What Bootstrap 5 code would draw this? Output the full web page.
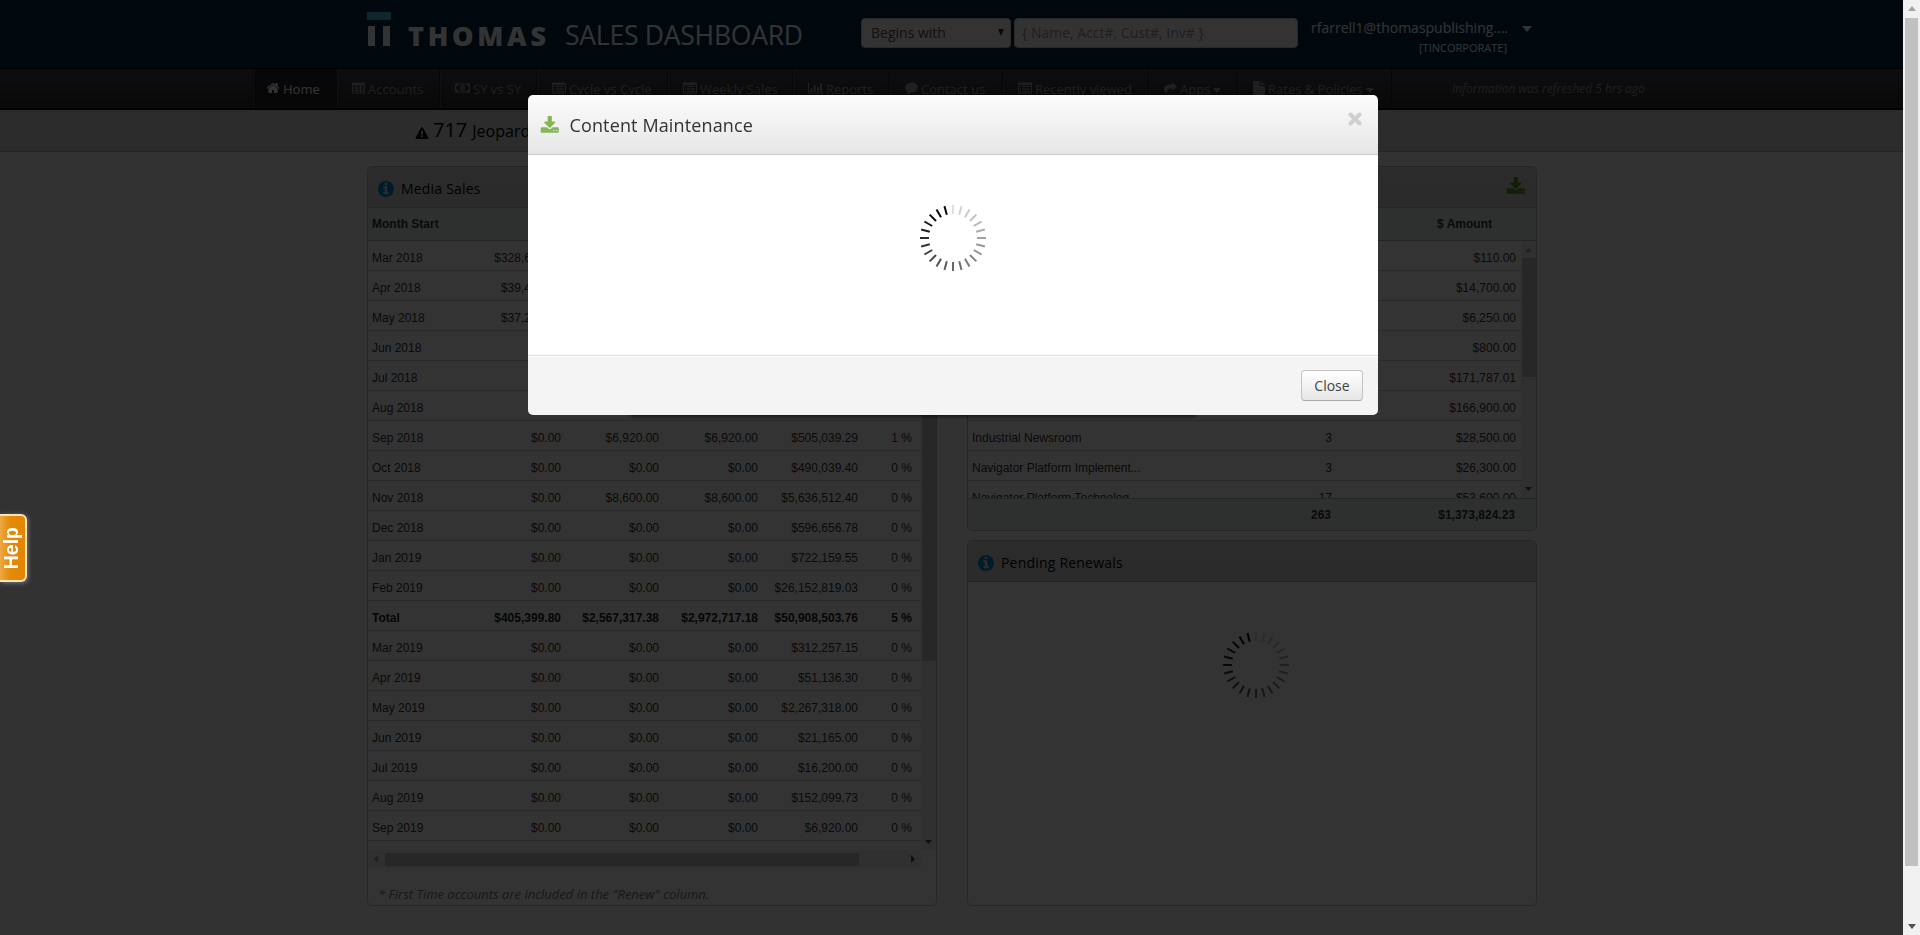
<!DOCTYPE html>
<html lang="en">
<head>
<meta charset="utf-8">
<title>Sales Dashboard</title>
<link href="https://cdn.jsdelivr.net/npm/bootstrap@5.3.0/dist/css/bootstrap.min.css" rel="stylesheet">
<style>
html,body{height:935px;overflow:hidden}
body{font-family:"Open Sans","Liberation Sans",sans-serif;font-size:14px;line-height:20px;color:#333;background:#f7f7f7}
svg{fill:currentColor;flex:none}
.page{width:1904px;height:935px;overflow:hidden;background:#f7f7f7}
.wrap{width:1170px}
.topbar{height:68px;background:#002b43;color:#fff}
.logo{padding-top:10px;width:494px;overflow:visible}
.search{padding-top:18px;gap:3px}
.search .form-select,.search .form-control{height:30px;border:1px solid #ccc;border-radius:4px;padding:3px 6px 3px 9px;font-size:14px;line-height:20px;color:#555;background:#fff}
.search .form-select{width:150px}
.search .form-control{width:284px;padding:2px 7px 4px}
.search .form-control::placeholder{color:#999}
.user{padding-top:18px;margin-left:13px;width:196px;text-align:right;font-size:14px;line-height:20px;white-space:nowrap}
.user small{display:block;font-size:11px;line-height:20px}
.mainnav{height:42px;border-top:1px solid #000;border-bottom:2px solid #000;background:linear-gradient(#454545,#2d2d2d);padding-left:252px;font-size:13px;color:#999}
.mainnav .nav-link{color:#999;padding:10px 0 0 15px;border-left:1px solid #222;box-shadow:inset 1px 0 #505050;gap:3px;line-height:20px;white-space:nowrap}
.mainnav .nav-link svg{margin-top:2px}
.mainnav .nav-link.active{color:#fff;background:#262626;padding-left:13px}
.refreshed{font-size:12px;font-style:italic;padding:10px 0 0 60px;border-left:1px solid #222}
.subbar{height:42px;background:#d9d9d9;border-bottom:1px solid #b4b4b4;color:#000;padding-left:415px;font-size:16px}
.subbar b{font-weight:400;font-size:20px}
.panel{width:570px;border:1px solid #bbb;border-radius:5px;background:#fff;overflow:hidden}
.panel-head{height:41px;background:linear-gradient(#dadada,#d4d4d4);border-bottom:1px solid #bbb;color:#000;font-weight:500;font-size:14px;letter-spacing:.2px;padding:4px 11px 0 10px;gap:7px}
.panel-head .info{color:#0088cc;margin-top:-1px}
.grid-font{font-family:"Liberation Sans",Arial,sans-serif;font-size:12px}
.grid-font table{table-layout:fixed;margin:0;color:#333;border-collapse:separate;border-spacing:0}
.grid-font td{height:30px;padding:4px 5px 0;border-bottom:1px solid #ccc;text-align:right;vertical-align:middle;line-height:16px;white-space:nowrap;overflow:hidden;color:#333;background:none;box-shadow:none}
.grid-font td:first-child{text-align:left;padding-left:4px}
.grid-font tr.fw-bold td{color:#222}
.gridhead,.gridfoot{height:33px;background:#e2f1ec;border-bottom:1px solid #bbb;font-weight:700;padding:8px 4px;line-height:16px;color:#333}
.gridfoot{border-top:1px solid #bbb;border-bottom:0}
.track{background:#f1f1f1;width:16px;color:#505050}
.thumb{background:#c1c1c1}
.note{font-size:13px;font-style:italic;color:#777;padding:16px 0 0 10px}
.modal-backdrop.show{opacity:.8}
.modal{width:1906px;overflow:hidden}
.modal-dialog{max-width:850px;width:850px;margin:95px auto 0}
.modal-content{border:0;border-radius:5px;height:320px;background:transparent}
.modal-content::after{content:"";position:absolute;z-index:-1;left:102px;right:182px;bottom:1px;height:60px;box-shadow:0 2px 4px rgba(0,0,0,.75)}
.modal-header{height:60px;padding:0 16px 0 12px;background:linear-gradient(#fcfcfc,#e6e6e6);border-bottom:1px solid #ccc;border-radius:5px 5px 0 0;color:#333}
.modal-title{font-size:18px;font-weight:500;line-height:24px;margin-left:10px;letter-spacing:.13px}
.modal-body{height:200px;flex:none;background:#fff;padding:0}
.modal-footer{height:60px;background:#f4f4f4;border-top:1px solid #ddd;box-shadow:inset 0 1px #fff;padding:0 15px;border-radius:0 0 5px 5px}
.btn-close-text{margin:0;width:62px;height:31px;padding:4px 0;font-size:14px;line-height:20px;color:#444;border:1px solid #c4c4c4;border-bottom-color:#aaa;border-radius:4px;background:linear-gradient(#fff,#e6e6e6)}
.help{position:fixed;z-index:1080;left:0;top:514px;width:27px;height:68px;background:linear-gradient(90deg,#eea845,#e48a06 40%,#e28500);border:2px solid #fbe3bd;border-left:0;border-radius:0 6px 6px 0;box-shadow:1px 1px 4px #777;color:#fff;font:700 19.5px/24px "Liberation Sans",Arial,sans-serif}
.help span{writing-mode:vertical-rl;transform:rotate(180deg);width:24px;margin-right:4px}
.pagebar{position:fixed;z-index:1081;right:0;top:0;width:17px;height:935px;background:#f1f1f1}
.pagebar .thumb{width:13px;height:848px;margin:7px auto 58px}
</style>
</head>
<body>
<svg width="0" height="0" class="position-absolute">
<symbol id="home" viewBox="0 0 1792 1792"><path d="M1472 992v480q0 26-19 45t-45 19h-384v-384h-256v384h-384q-26 0-45-19t-19-45v-480q0-1 .5-3t.5-3l575-474 575 474q1 2 1 6zm223-69l-62 74q-8 9-21 11h-3q-13 0-21-7l-692-577-692 577q-12 8-24 7-13-2-21-11l-62-74q-8-10-7-23.5t11-21.5l719-599q32-26 76-26t76 26l244 204v-195q0-14 9-23t23-9h192q14 0 23 9t9 23v408l219 182q10 8 11 21.5t-7 23.5z"/></symbol>
<symbol id="dl" viewBox="0 0 1792 1792"><path d="M1344 1344q0-26-19-45t-45-19-45 19-19 45 19 45 45 19 45-19 19-45zm256 0q0-26-19-45t-45-19-45 19-19 45 19 45 45 19 45-19 19-45zm128-224v320q0 40-28 68t-68 28h-1472q-40 0-68-28t-28-68v-320q0-40 28-68t68-28h465l135 136q58 56 136 56t136-56l136-136h464q40 0 68 28t28 68zm-325-569q17 41-14 70l-448 448q-18 19-45 19t-45-19l-448-448q-31-29-14-70 17-39 59-39h256v-448q0-26 19-45t45-19h256q26 0 45 19t19 45v448h256q42 0 59 39z"/></symbol>
<symbol id="info" viewBox="128 128 1536 1536"><path d="M1152 1376v-160q0-14-9-23t-23-9h-96v-512q0-14-9-23t-23-9h-320q-14 0-23 9t-9 23v160q0 14 9 23t23 9h96v320h-96q-14 0-23 9t-9 23v160q0 14 9 23t23 9h448q14 0 23-9t9-23zm-128-896v-160q0-14-9-23t-23-9h-192q-14 0-23 9t-9 23v160q0 14 9 23t23 9h192q14 0 23-9t9-23zm640 416q0 209-103 385.5t-279.5 279.5-385.5 103-385.5-103-279.5-279.5-103-385.5 103-385.5 279.5-279.5 385.5-103 385.5 103 279.5 279.5 103 385.5z"/></symbol>
<symbol id="warn" viewBox="0 0 1792 1664"><path d="M1024 1375v-190q0-14-9.5-23.5t-22.5-9.5h-192q-13 0-22.5 9.5t-9.5 23.5v190q0 14 9.5 23.5t22.5 9.5h192q13 0 22.5-9.5t9.5-23.5zm-2-374l18-459q0-12-10-19-13-11-24-11h-220q-11 0-24 11-10 7-10 21l17 457q0 10 10 16.5t24 6.5h185q14 0 23.5-6.5t10.5-16.5zm-14-934l768 1408q35 63-2 126-17 29-46.5 46t-63.5 17h-1536q-34 0-63.5-17t-46.5-46q-37-63-2-126l768-1408q17-31 47-49t65-18 65 18 47 49z"/></symbol>
<symbol id="tbl" viewBox="0 0 13 13"><path fill-rule="evenodd" d="M1 1h11q1 0 1 1v9q0 1-1 1H1q-1 0-1-1V2q0-1 1-1zM1 4v2h3V4zm4 0v2h3V4zm4 0v2h3V4zM1 7v1.700h3V7zm4 0v1.700h3V7zm4 0v1.700h3V7zM1 9.500V11h3V9.500zm4 0V11h3V9.500zm4 0V11h3V9.500z"/></symbol>
<symbol id="money" viewBox="0 0 15 13"><path fill-rule="evenodd" d="M0 2h15v9H0zM3.200 3A2.200 2.200 0 0 1 1 5.200v2.600A2.200 2.200 0 0 1 3.200 10h8.600A2.200 2.200 0 0 1 14 7.800V5.200A2.200 2.200 0 0 1 11.800 3zM7.500 3.500c1.500 0 2.300 1.400 2.300 3s-.8 3-2.300 3-2.300-1.400-2.300-3 .8-3 2.300-3zM6.500 5.300v.6h.6v2H6.400v.6h2.200v-.6H8V4.800h-.7z"/></symbol>
<symbol id="list" viewBox="0 0 14 13"><path fill-rule="evenodd" d="M1 1h12q1 0 1 1v9q0 1-1 1H1q-1 0-1-1V2q0-1 1-1zm0 2.500V11h12V3.500zM2 4.500h1.200v1H2zm2.200 0H12v1H4.200zM2 6.700h1.200v1H2zm2.200 0H12v1H4.200zM2 8.900h1.200v1H2zm2.200 0H12v1H4.200z"/></symbol>
<symbol id="bars" viewBox="0 0 15 13"><path d="M0 1h1v10h14v1H0zM2.500 7h2v3.300h-2zM5.700 3.500h2v6.800h-2zM8.900 5.200h2v5.100h-2zM12 2h2v8.300h-2z"/></symbol>
<symbol id="comment" viewBox="0 0 13 13"><path d="M6.500 1C10 1 13 3.200 13 6s-3 5-6.500 5h-1C4.500 12 3 12.700 1.500 12.800 2.200 12 2.500 11 2.400 10 .9 9 0 7.600 0 6c0-2.800 3-5 6.500-5z"/></symbol>
<symbol id="share" viewBox="0 0 13 13"><path d="M8 .8 13 5 8 9.300V7C4.500 7 2.500 8 3.200 12.200 1 10.600 0 9 .2 7 .5 4.200 3.500 3 8 3z"/></symbol>
<symbol id="file" viewBox="0 0 11 13"><path d="M0 0h6v4.600h5V13H0zM7 0l4 3.700H7z"/></symbol>
<symbol id="down" viewBox="0 0 8 5" preserveAspectRatio="none"><path d="M0 0h8L4 5z"/></symbol>
<symbol id="up" viewBox="0 0 8 5"><path d="M0 5h8L4 0z"/></symbol>
<symbol id="ticks" viewBox="-35 -35 70 70"><g id="tickset" stroke-width="2"></g></symbol>
</svg>

<div class="page">
  <header class="topbar">
    <div class="wrap mx-auto d-flex">
      <svg class="logo" width="494" height="50" viewBox="0 0 494 40" preserveAspectRatio="xMinYMin">
        <path fill="#4bbcdc" d="M0 2h24v8H0z"/><path fill="#fff" d="M1 16h7v20H1zM16 16h7v20h-7z"/>
        <text x="41" y="36" font-family="Open Sans" font-weight="800" font-size="27" textLength="138" lengthAdjust="spacing">THOMAS</text>
        <text x="198" y="35" font-family="Open Sans" font-size="26.500" textLength="238">SALES DASHBOARD</text>
      </svg>
      <div class="search d-flex">
        <div class="form-select d-flex justify-content-between align-items-center">Begins with <svg width="6" height="7" class="text-dark" style="margin-top:-1px"><use href="#down"/></svg></div>
        <input class="form-control" placeholder="{ Name, Acct#, Cust#, Inv# }">
      </div>
      <div class="user">rfarrell1@thomaspublishing....<small>[TINCORPORATE]</small></div>
      <svg width="10" height="6" style="margin:26px 0 0 15px"><use href="#down"/></svg>
    </div>
  </header>
  <nav class="mainnav d-flex" id="nav"></nav>
  <div class="subbar d-flex align-items-center">
    <svg width="14" height="12" class="mt-1"><use href="#warn"/></svg><b class="ms-1" style="margin-top:-2px">717</b><span style="margin-left:5px">Jeopardy</span>
  </div>
  <main class="wrap mx-auto d-flex justify-content-between" style="padding-top:14px">
    <section class="panel" style="height:740px">
      <div class="panel-head d-flex align-items-center"><svg class="info" width="16" height="16"><use href="#info"/></svg>Media Sales</div>
      <div class="grid-font">
        <div class="gridhead">Month Start</div>
        <div class="d-flex" style="height:609px">
          <table id="media" style="width:553px;height:600px"><colgroup><col style="width:98px"><col style="width:100px"><col style="width:98px"><col style="width:99px"><col style="width:100px"><col style="width:54px"><col style="width:4px"></colgroup></table>
          <div class="track d-flex flex-column justify-content-between align-items-center"><div class="thumb" style="width:14px;height:404px;margin-top:16px"></div><svg width="7" height="4" style="margin-bottom:6px"><use href="#down"/></svg></div>
        </div>
        <div class="track d-flex align-items-center" style="width:553px;height:18px;padding:0 6px"><svg width="4" height="8" viewBox="0 0 4 8" opacity=".5"><path d="M4 0v8L0 4z"/></svg><div class="thumb" style="width:474px;height:13px;margin-left:7px"></div><svg class="ms-auto" width="4" height="8" viewBox="0 0 4 8"><path d="M0 0v8l4-4z"/></svg></div>
      </div>
      <div class="note">* First Time accounts are included in the "Renew" column.</div>
    </section>
    <div>
      <section class="panel" style="height:365px;margin-bottom:9px">
        <div class="panel-head d-flex align-items-center justify-content-end" style="padding-top:0"><svg width="19.500" height="19.500" style="color:#4f9422"><use href="#dl"/></svg></div>
        <div class="grid-font">
          <div class="gridhead text-end" style="padding-right:44px">$ Amount</div>
          <div class="d-flex overflow-hidden" style="height:257px">
            <table id="products" style="width:553px;height:270px"><colgroup><col style="width:269px"><col style="width:100px"><col style="width:184px"></colgroup></table>
            <div class="track d-flex flex-column align-items-center"><svg width="7" height="4" opacity=".5" style="margin-top:7px"><use href="#up"/></svg><div class="thumb" style="width:14px;height:119px;margin-top:6px"></div><svg class="mt-auto" width="7" height="4" style="margin-bottom:7px"><use href="#down"/></svg></div>
          </div>
          <div class="gridfoot d-flex justify-content-end" style="padding-right:21px"><span>263</span><span class="text-end" style="width:184px">$1,373,824.23</span></div>
        </div>
      </section>
      <section class="panel" style="height:366px">
        <div class="panel-head d-flex align-items-center"><svg class="info" width="16" height="16"><use href="#info"/></svg>Pending Renewals</div>
        <div class="text-center" style="padding:48px 0 0 8px"><svg width="70" height="70"><use href="#ticks"/></svg></div>
      </section>
    </div>
  </main>
</div>

<div class="modal-backdrop show"></div>
<div class="modal show d-block" tabindex="-1">
  <div class="modal-dialog">
    <div class="modal-content">
      <div class="modal-header">
        <svg width="19.500" height="19.500" style="color:#87b556;margin-top:3px"><use href="#dl"/></svg>
        <h4 class="modal-title me-auto">Content Maintenance</h4>
        <svg width="14" height="14" viewBox="0 0 14 14" style="margin-top:-11px"><path stroke="#cfcfcf" stroke-width="4" stroke-linecap="round" d="M2.500 2.500l9 9m0-9l-9 9"/></svg>
      </div>
      <div class="modal-body text-center"><svg width="70" height="70" style="margin-top:48px"><use href="#ticks"/></svg></div>
      <div class="modal-footer"><button class="btn btn-close-text">Close</button></div>
    </div>
  </div>
</div>
<div class="help d-flex justify-content-center align-items-center"><span>Help</span></div>
<div class="pagebar d-flex flex-column align-items-center" style="padding-top:6px"><svg width="8" height="5" style="color:#a3a3a3"><use href="#up"/></svg><div class="thumb"></div><svg width="8" height="5" style="color:#505050"><use href="#down"/></svg></div>

<script src="https://cdn.jsdelivr.net/npm/bootstrap@5.3.0/dist/js/bootstrap.bundle.min.js"></script>
<script>
// navigation: icon, label, width, icon width, has menu
const nav=[["home","Home",84,14],["tbl","Accounts",103,13],["money","SY vs SY",97,15],["list","Cycle vs Cycle",131,14],["list","Weekly Sales",125,14],["bars","Reports",97,15],["comment","Contact us",113,13],["list","Recently viewed",146,14],["share","Apps",89,13,1],["file","Rates & Policies",154,12,1]];
document.getElementById("nav").innerHTML=nav.map((n,i)=>`<a class="nav-link d-flex${i?"":" active"}" style="width:${n[2]}px"><svg width="${n[3]}" height="14"><use href="#${n[0]}"/></svg><span>${n[1].replace("&","&amp;")}</span>${n[4]?'<svg width="8" height="5" style="margin-top:9px"><use href="#down"/></svg>':""}</a>`).join("")+'<span class="refreshed">Information was refreshed 5 hrs ago</span>';
const z="$0.00";
const media=[["Mar 2018","$328,612.40"],["Apr 2018","$39,415.20"],["May 2018","$37,210.60"],["Jun 2018"],["Jul 2018"],["Aug 2018"],
["Sep 2018",z,"$6,920.00","$6,920.00","$505,039.29","1 %"],["Oct 2018",z,z,z,"$490,039.40","0 %"],["Nov 2018",z,"$8,600.00","$8,600.00","$5,636,512.40","0 %"],["Dec 2018",z,z,z,"$596,656.78","0 %"],["Jan 2019",z,z,z,"$722,159.55","0 %"],["Feb 2019",z,z,z,"$26,152,819.03","0 %"],
["Total","$405,399.80","$2,567,317.38","$2,972,717.18","$50,908,503.76","5 %"],
["Mar 2019",z,z,z,"$312,257.15","0 %"],["Apr 2019",z,z,z,"$51,136.30","0 %"],["May 2019",z,z,z,"$2,267,318.00","0 %"],["Jun 2019",z,z,z,"$21,165.00","0 %"],["Jul 2019",z,z,z,"$16,200.00","0 %"],["Aug 2019",z,z,z,"$152,099.73","0 %"],["Sep 2019",z,z,z,"$6,920.00","0 %"]];
const products=[["","","$110.00"],["","","$14,700.00"],["","","$6,250.00"],["","","$800.00"],["","","$171,787.01"],["","","$166,900.00"],["Industrial Newsroom","3","$28,500.00"],["Navigator Platform Implement...","3","$26,300.00"],["Navigator Platform Technolog...","17","$53,600.00"]];
function fill(id,rows,cols){document.getElementById(id).insertAdjacentHTML("beforeend","<tbody>"+rows.map(r=>`<tr${r[0]=="Total"?' class="fw-bold"':""}>`+Array.from({length:cols},(_,i)=>`<td>${r[i]||""}</td>`).join("")+"</tr>").join("")+"</tbody>");}
fill("media",media,7);fill("products",products,3);
document.getElementById("tickset").innerHTML=Array.from({length:24},(_,i)=>{const c=Math.max(10,Math.round(222-i*10));return `<path stroke="rgb(${c},${c},${c})" d="M0-33V-24" transform="rotate(${i*15})"/>`}).join("");
</script>
</body>
</html>
